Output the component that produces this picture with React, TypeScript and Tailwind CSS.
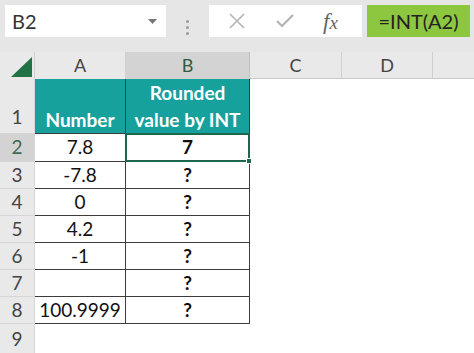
const font = { fontFamily: "Lato, 'Open Sans', sans-serif" };

const rows: { n: number; a: string; b: string; h: string }[] = [
	{ n: 2, a: "7.8", b: "7", h: "h-[28px]" },
	{ n: 3, a: "-7.8", b: "?", h: "h-[27px]" },
	{ n: 4, a: "0", b: "?", h: "h-[27px]" },
	{ n: 5, a: "4.2", b: "?", h: "h-[27px]" },
	{ n: 6, a: "-1", b: "?", h: "h-[27px]" },
	{ n: 7, a: "", b: "?", h: "h-[27px]" },
	{ n: 8, a: "100.9999", b: "?", h: "h-[27px]" },
];

function FormulaBar() {
	return (
		<div className="flex h-[52px] bg-[#e6e6e6] pt-[5px]">
			<div className="ml-[5px] flex h-[32px] w-[161px] items-center justify-between bg-white pl-[7px] pr-[9px]">
				<span className="text-[20px] text-[#333]">B2</span>
				<svg width="9" height="5" viewBox="0 0 9 5">
					<path d="M0 0h9L4.5 5z" fill="#777" />
				</svg>
			</div>
			<div className="flex w-[43px] flex-col items-center justify-center gap-[3px] pb-[2px]">
				<span className="h-[3px] w-[3px] rounded-full bg-[#9a9a9a]" />
				<span className="h-[3px] w-[3px] rounded-full bg-[#9a9a9a]" />
				<span className="h-[3px] w-[3px] rounded-full bg-[#9a9a9a]" />
			</div>
			<div className="flex h-[32px] w-[153px] items-center bg-white">
				<svg className="ml-[20px]" width="16" height="16" viewBox="0 0 16 16">
					<path d="M1 1l14 14M15 1L1 15" stroke="#b4b4b4" strokeWidth="1.6" />
				</svg>
				<svg className="ml-[31px]" width="18" height="14" viewBox="0 0 18 14">
					<path d="M1 7l5 5L17 1" stroke="#b4b4b4" strokeWidth="2.2" fill="none" />
				</svg>
				<span className="ml-[29px] font-['Liberation_Serif'] text-[23px] italic leading-none text-[#666]">
					f<span className="text-[19px]">x</span>
				</span>
			</div>
			<div className="ml-[5px] flex h-[32px] w-[103px] items-center justify-center bg-[#8dc63f] text-[20px] text-[#222]">
				=INT(A2)
			</div>
		</div>
	);
}

export default function App() {
	return (
		<div className="h-[353px] w-[474px] overflow-hidden bg-white" style={font}>
			<FormulaBar />
			<div className="flex h-[27px] bg-[#e9e9e9] text-[18px] text-[#444]">
				<div className="flex w-[35px] items-end justify-end border-r border-[#d0d0d0] pb-[2px] pr-[2px]">
					<svg width="21" height="20" viewBox="0 0 21 20">
						<path d="M21 0V20H0z" fill="#217346" />
					</svg>
				</div>
				<div className="flex w-[91px] items-center justify-center border-r border-[#d0d0d0]">A</div>
				<div className="flex w-[124px] items-center justify-center border-r border-[#c0c0c0] bg-[#d3d3d3] text-[#2d5c45]">B</div>
				<div className="flex w-[92px] items-center justify-center border-r border-[#d0d0d0] border-b border-b-[#c8c8c8]">C</div>
				<div className="flex w-[91px] items-center justify-center border-r border-[#d0d0d0] border-b border-b-[#c8c8c8]">D</div>
				<div className="flex-1 border-b border-[#c8c8c8]" />
			</div>

			<div className="flex h-[55px]">
				<div className="flex w-[35px] items-end justify-center border-b border-r border-[#d6d6d6] bg-[#e9e9e9] pb-[2px] text-[19px] text-[#444]">
					1
				</div>
				<div className="flex w-[91px] items-end justify-center border-b border-r border-[#3c3c3c] bg-[#17a19c] text-[19px] font-bold leading-[27px] text-white">
					Number
				</div>
				<div className="flex w-[124px] items-end justify-center border-b border-r border-[#3c3c3c] bg-[#17a19c] text-center text-[19px] font-bold leading-[27px] text-white">
					Rounded
					<br />
					value by INT
				</div>
			</div>

			{rows.map((r) => (
				<div key={r.n} className={`flex ${r.h}`}>
					<div
						className={`flex w-[35px] items-center justify-center border-b border-r border-[#d6d6d6] text-[19px] ${
							r.n === 2 ? "bg-[#d3d3d3] text-[#3d6a55]" : "bg-[#e9e9e9] text-[#444]"
						}`}
					>
						{r.n}
					</div>
					<div className="flex w-[91px] items-center justify-center border-b border-r border-[#3c3c3c] text-[19px] text-[#111]">
						{r.a}
					</div>
					{r.n === 2 ? (
						<div className="relative -mt-px flex h-[29px] w-[125px] -ml-px items-center justify-center border-2 border-[#1e6650] text-[19px] font-bold text-[#111]">
							{r.b}
							<span className="absolute -bottom-[4px] -right-[4px] h-[6px] w-[6px] border border-white bg-[#1e6650]" />
						</div>
					) : (
						<div className="flex w-[124px] items-center justify-center border-b border-r border-[#3c3c3c] text-[19px] font-bold text-[#111]">
							{r.b}
						</div>
					)}
				</div>
			))}

			<div className="flex h-[30px]">
				<div className="flex w-[35px] items-center justify-center border-r border-[#d6d6d6] bg-[#e9e9e9] text-[19px] text-[#444]">
					9
				</div>
			</div>
		</div>
	);
}
